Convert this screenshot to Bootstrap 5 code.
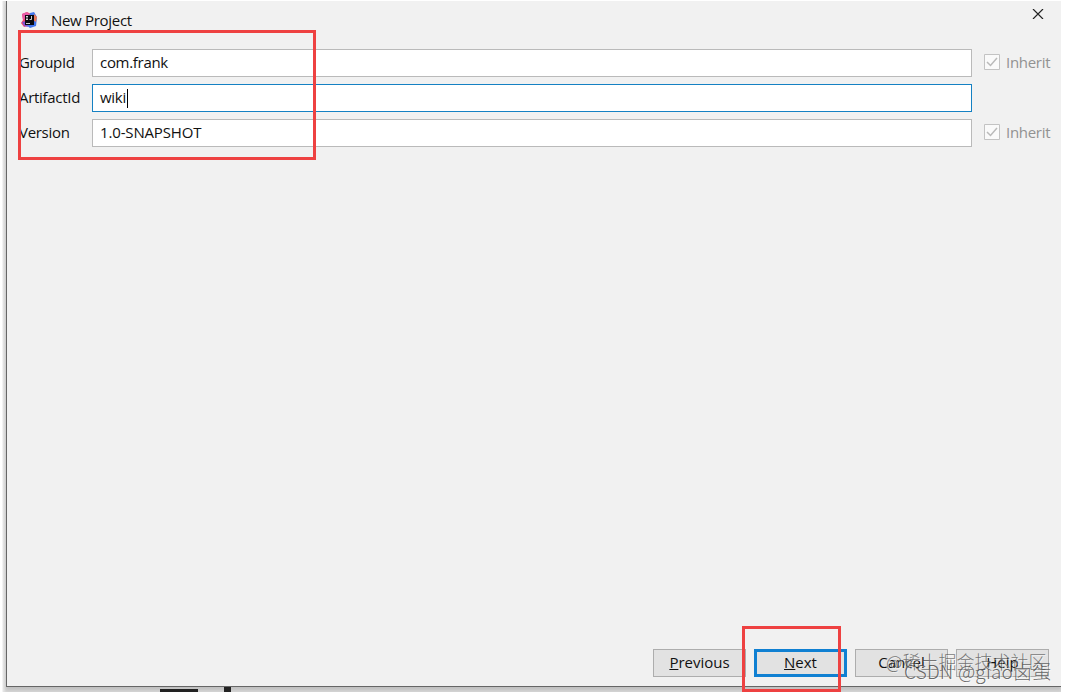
<!DOCTYPE html>
<html lang="en">
<head>
    <meta charset="UTF-8">
    <meta name="viewport" content="width=device-width, initial-scale=1.0">
    <title>New Project</title>
    <link href="https://cdn.jsdelivr.net/npm/bootstrap@5.3.0/dist/css/bootstrap.min.css" rel="stylesheet">
    <style>
        body {
            width: 1067px;
            height: 692px;
            background: #fff;
            color: #111;
            font-family: "Open Sans", "Noto Sans CJK SC", sans-serif;
            font-size: 15px;
            letter-spacing: -0.3px;
            line-height: 20px;
        }
        .desktop {
            width: 1061px;
            height: 692px;
            padding: 1px 0 0 6px;
            background: linear-gradient(#fff 1px, transparent 1px), linear-gradient(90deg, #fff 2px, #e6e6e6 3px, #d6d6d6 6px);
        }
        .dialog {
            height: 686px;
            background: #f1f1f1;
            border-left: 1px solid #666;
            border-bottom: 1px solid #666;
            box-shadow: 0 3px 3px rgba(0, 0, 0, 0.1);
        }
        .titlebar {
            height: 48px;
            padding: 9px 17px 0 14px;
        }
        .app-title {
            margin-left: 13px;
        }
        .close-icon {
            margin-right: -1px;
            margin-top: -1px;
        }
        .fields {
            gap: 7px;
            padding-left: 12px;
        }
        .field {
            height: 28px;
        }
        .field-label {
            width: 73px;
            padding-bottom: 2px;
        }
        .field .form-control {
            width: 880px;
            height: 28px;
            padding: 0 7px 2px;
            border: 1px solid #bababa;
            background: #fff;
            color: #111;
            font-size: 15px;
            line-height: 24px;
        }
        .field .form-control.active {
            border-color: #1581c3;
        }
        .field .form-control.version {
            letter-spacing: -0.15px;
        }
        .caret {
            width: 1px;
            height: 19px;
            margin: 2px 0 0 1px;
            background: #000;
        }
        .inherit {
            gap: 6px;
            margin-left: 12px;
            padding-bottom: 2px;
            color: #929292;
        }
        .actions {
            gap: 8px;
            padding: 0 12px 9px 0;
        }
        .actions .btn {
            width: 93px;
            height: 28px;
            padding: 0 0 2px;
            border: 1px solid #adadad;
            background: #e2e2e2;
            color: #111;
            font-size: 15px;
            line-height: 24px;
        }
        .actions .btn.default {
            border: 3px solid #1080d2;
            line-height: 20px;
        }
        .marker {
            border: 3px solid #ee4141;
        }
        .marker-fields {
            left: 18px;
            top: 30px;
            width: 298px;
            height: 130px;
        }
        .marker-next {
            left: 742px;
            top: 626px;
            width: 99px;
            height: 66px;
        }
        .watermark {
            white-space: nowrap;
            font-family: "Noto Sans CJK SC", sans-serif;
            font-weight: 300;
            letter-spacing: 0;
            line-height: 24px;
            text-shadow: 1px 1px 0 rgba(255, 255, 255, 0.5);
        }
        .watermark-site {
            left: 886px;
            top: 649px;
            color: rgba(80, 80, 80, 0.75);
            font-size: 18px;
        }
        .watermark-user {
            left: 904px;
            top: 659px;
            color: rgba(80, 80, 80, 0.85);
            font-size: 19px;
            letter-spacing: 0.2px;
        }
        .behind {
            background: #222;
        }
        .behind-bar {
            left: 160px;
            top: 689px;
            width: 38px;
            height: 3px;
        }
        .behind-stem {
            left: 224px;
            top: 687px;
            width: 7px;
            height: 5px;
        }
    </style>
</head>
<body class="position-relative overflow-hidden">
    <div class="desktop overflow-hidden">
        <div class="dialog d-flex flex-column">
            <header class="titlebar d-flex align-items-start">
                <svg width="17" height="20" viewBox="0 0 17 20">
                    <path d="M1 4 6 2l4 2-1 11-6 2-3-4 2-3z" fill="#f0446b"/>
                    <path d="M1 4 6 2l3 3-7 5z" fill="#e75aa6"/>
                    <path d="M9 3l4-1 3 5-1 9-6 2-4-3z" fill="#4276ee"/>
                    <path d="M1 12l4-1 2 6-4-1z" fill="#8052d0"/>
                    <path d="M13 4l3 3-1 5-3-2z" fill="#ec7958"/>
                    <path d="M4 5h9v10H4z" fill="#090910"/>
                    <path d="M5 6.500h2M6 6.500v3M5 9.500h2M10.500 6v3.500H8.500M5 13.500h4" fill="none" stroke="#fff" stroke-width=".8"/>
                </svg>
                <span class="app-title">New Project</span>
                <svg class="close-icon ms-auto" width="13" height="10" viewBox="0 0 13 10">
                    <path d="M1 0 11 10M11 0 1 10" fill="none" stroke="#222" stroke-width="1.200"/>
                </svg>
            </header>

            <main class="fields d-flex flex-column">
                <div class="field d-flex align-items-center">
                    <span class="field-label">GroupId</span>
                    <div class="form-control rounded-0">com.frank</div>
                    <div class="inherit d-flex align-items-center">
                        <svg width="16" height="16" viewBox="0 0 16 16">
                            <path d="M.5.5h15v15H.5z" fill="#fafafa" stroke="#c3c3c3"/>
                            <path d="M3 8l3.500 3.500L13 4" fill="none" stroke="#bababa" stroke-width="1.500"/>
                        </svg>
                        <span>Inherit</span>
                    </div>
                </div>
                <div class="field d-flex align-items-center">
                    <span class="field-label">ArtifactId</span>
                    <div class="form-control active rounded-0 d-flex align-items-center">wiki<span class="caret"></span></div>
                </div>
                <div class="field d-flex align-items-center">
                    <span class="field-label">Version</span>
                    <div class="form-control version rounded-0">1.0-SNAPSHOT</div>
                    <div class="inherit d-flex align-items-center">
                        <svg width="16" height="16" viewBox="0 0 16 16">
                            <path d="M.5.5h15v15H.5z" fill="#fafafa" stroke="#c3c3c3"/>
                            <path d="M3 8l3.500 3.500L13 4" fill="none" stroke="#bababa" stroke-width="1.500"/>
                        </svg>
                        <span>Inherit</span>
                    </div>
                </div>
            </main>

            <footer class="actions d-flex justify-content-end mt-auto">
                <button type="button" class="btn rounded-0"><u>P</u>revious</button>
                <button type="button" class="btn default rounded-0"><u>N</u>ext</button>
                <button type="button" class="btn rounded-0">Cancel</button>
                <button type="button" class="btn rounded-0">Help</button>
            </footer>
        </div>
    </div>

    <div class="behind behind-bar position-absolute"></div>
    <div class="behind behind-stem position-absolute"></div>
    <div class="marker marker-fields position-absolute"></div>
    <div class="marker marker-next position-absolute"></div>
    <div class="watermark watermark-site position-absolute">@稀土掘金技术社区</div>
    <div class="watermark watermark-user position-absolute">CSDN @giao卤蛋</div>

    <script src="https://cdn.jsdelivr.net/npm/bootstrap@5.3.0/dist/js/bootstrap.bundle.min.js"></script>
</body>
</html>
